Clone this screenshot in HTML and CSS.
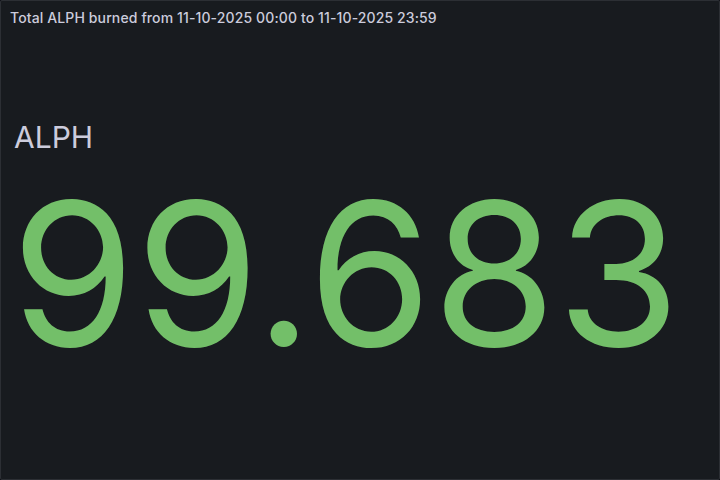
FILE: index.html
```html
<!DOCTYPE html>
<html lang="en">
<head>
  <meta charset="UTF-8" />
  <title>ALPH burned</title>
  <link rel="stylesheet" href="styles.css">
</head>
<body>

  <!-- Stat panel -->
  <section class="panel">
    <header class="panel-header">
      <h2 class="panel-title">Total ALPH burned from 11-10-2025 00:00 to 11-10-2025 23:59</h2>
    </header>
    <div class="panel-body">
      <div class="stat">
        <div class="stat-label">ALPH</div>
        <div class="stat-value">99.683</div>
      </div>
    </div>
  </section>

</body>
</html>
```
FILE: styles.css
```css
html, body {
  margin: 0;
  height: 100%;
  background: #111217;
}

body {
  font-family: Inter, "Noto Sans", sans-serif;
  color: #ccccdc;
}

.panel {
  box-sizing: border-box;
  height: 480px;
  width: 720px;
  background: #181b1f;
  border: 1px solid #2c2f34;
  border-radius: 2px;
  display: flex;
  flex-direction: column;
}

.panel-header {
  height: 32px;
  padding: 0 9px;
  display: flex;
  align-items: center;
}

.panel-title {
  margin: 0;
  font-size: 14px;
  font-weight: 500;
  letter-spacing: 0.12px;
  color: #ccccdc;
}

.panel-body {
  flex: 1;
  display: flex;
  align-items: center;
  padding: 0 13px 10px;
}

.stat {
  display: flex;
  flex-direction: column;
}

.stat-label {
  font-size: 30px;
  line-height: 1.2;
  font-weight: 400;
  color: #ccccdc;
}

.stat-value {
  margin-top: 8px;
  margin-left: -3px;
  font-size: 200px;
  line-height: 1.1;
  font-weight: 400;
  letter-spacing: 0.5px;
  color: #73bf69;
}
```
